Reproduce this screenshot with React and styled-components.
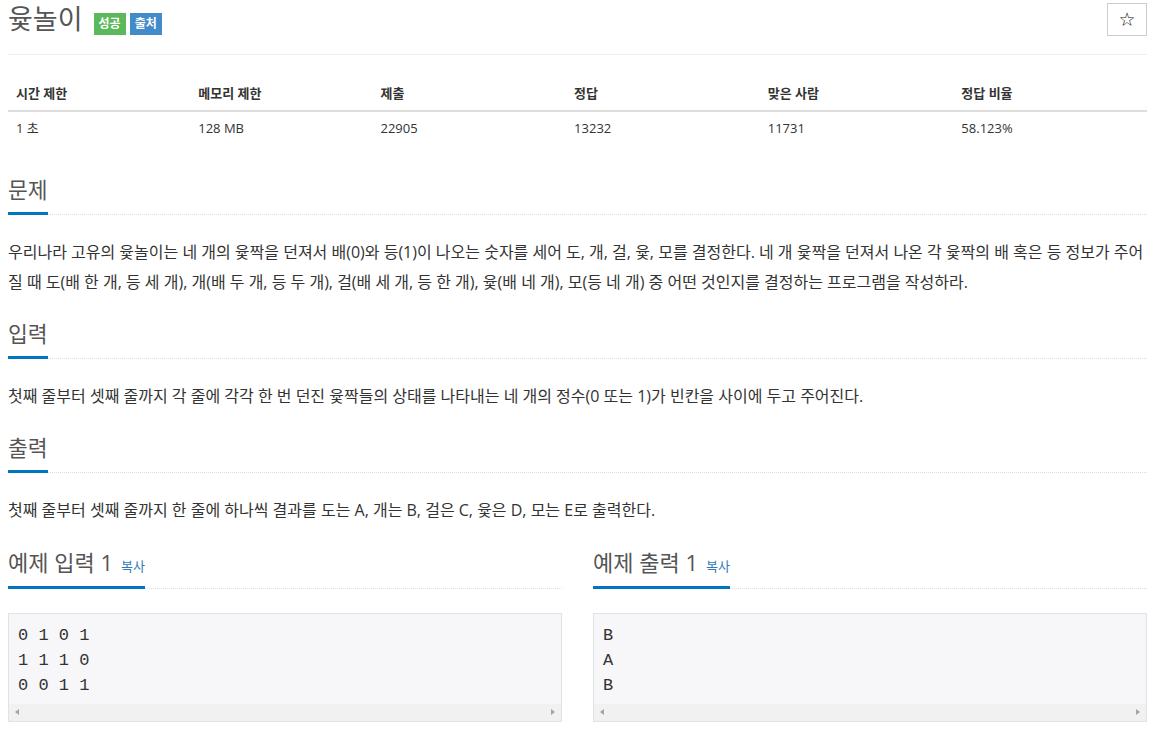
import React from 'react';
import styled, { createGlobalStyle } from 'styled-components';

const GlobalStyle = createGlobalStyle`
  body {
    margin: 0;
    background: #fff;
    font-family: "Open Sans", "Noto Sans CJK KR", sans-serif;
    color: #333;
  }
`;

const Page = styled.div`
  width: 1139px;
  padding: 0 12px 0 8px;
`;

const Header = styled.div`
  display: flex;
  align-items: flex-start;
  height: 51px;
  padding-top: 3px;
  border-bottom: 1px solid #eee;
`;

const Title = styled.h1`
  margin: 0;
  font-size: 27px;
  font-weight: 400;
  line-height: 32px;
  color: #555;
`;

const Label = styled.span`
  display: inline-block;
  margin-top: 10px;
  margin-left: ${p => p.$first ? '11px' : '4px'};
  padding: 0 5px;
  height: 22px;
  line-height: 22px;
  font-size: 12px;
  font-weight: 700;
  color: #fff;
  background: ${p => p.$color};
`;

const StarButton = styled.button`
  margin-left: auto;
  width: 40px;
  height: 33px;
  border: 1px solid #ccc;
  background: #fff;
  color: #111;
  font-size: 19px;
  line-height: 1;
  padding: 0;
  font-family: "DejaVu Sans", sans-serif;
`;

const Table = styled.table`
  width: 100%;
  margin-top: 21px;
  border-collapse: collapse;
  font-size: 13px;

  th {
    text-align: left;
    font-weight: 700;
    padding: 7px 8px;
    line-height: 20px;
    border-bottom: 2px solid #ddd;
  }

  td {
    padding: 6px 8px;
    line-height: 20px;
  }
`;

const Section = styled.section`
  margin-top: ${p => p.$top || '0px'};
`;

const Headline = styled.div`
  border-bottom: 1px dotted #ddd;
  margin-bottom: ${p => p.$flush ? '0' : '22px'};
  display: flex;
`;

const HeadTitle = styled.h2`
  margin: 0 0 -1px;
  font-size: ${p => p.$small ? '22px' : '21.5px'};
  font-weight: 400;
  line-height: 30px;
  padding-bottom: ${p => p.$small ? '5px' : '7px'};
  color: #555;
  border-bottom: 3px solid #0076c0;
  display: flex;
  align-items: baseline;
`;

const CopyLink = styled.span`
  font-size: 13px;
  color: #337ab7;
  margin-left: 8px;
`;

const Text = styled.p`
  margin: 0 0 22px;
  font-size: 16px;
  line-height: 30px;
  color: #333;
`;

const Samples = styled.div`
  display: grid;
  grid-template-columns: 1fr 1fr;
  column-gap: 31px;
`;

const Pre = styled.div`
  margin-top: 24px;
  border: 1px solid #e1e1e8;
  background: #f7f7f9;
`;

const Code = styled.pre`
  margin: 0;
  padding: 8.5px 9px 6px;
  font-family: "Liberation Mono", monospace;
  font-size: 17px;
  line-height: 25px;
  color: #333;
`;

const ScrollBar = styled.div`
  height: 17px;
  background: #f1f1f1;
  display: flex;
  align-items: center;
  justify-content: space-between;
  padding: 0 6px;
`;

const Arrow = styled.span`
  width: 0;
  height: 0;
  border-top: 3px solid transparent;
  border-bottom: 3px solid transparent;
  ${p => p.$dir === 'left'
    ? 'border-right: 4px solid #a3a3a3;'
    : 'border-left: 4px solid #a3a3a3;'}
`;

const stats = [
  ['시간 제한', '1 초', '16%'],
  ['메모리 제한', '128 MB', '16%'],
  ['제출', '22905', '17%'],
  ['정답', '13232', '17%'],
  ['맞은 사람', '11731', '17%'],
  ['정답 비율', '58.123%', '17%'],
];

const SampleBox = ({ title, data }) => (
  <div>
    <Headline $flush>
      <HeadTitle $small>
        {title}
        <CopyLink>복사</CopyLink>
      </HeadTitle>
    </Headline>
    <Pre>
      <Code>{data}</Code>
      <ScrollBar>
        <Arrow $dir="left" />
        <Arrow $dir="right" />
      </ScrollBar>
    </Pre>
  </div>
);

const App = () => (
  <Page>
    <GlobalStyle />
    <Header>
      <Title>윷놀이</Title>
      <Label $first $color="#5cb85c">성공</Label>
      <Label $color="#428bca">출처</Label>
      <StarButton>☆</StarButton>
    </Header>

    <Table>
      <thead>
        <tr>
          {stats.map(([h, , w]) => <th key={h} style={{ width: w }}>{h}</th>)}
        </tr>
      </thead>
      <tbody>
        <tr>
          {stats.map(([h, v]) => <td key={h}>{v}</td>)}
        </tr>
      </tbody>
    </Table>

    <Section $top="31px">
      <Headline><HeadTitle>문제</HeadTitle></Headline>
      <Text>
        우리나라 고유의 윷놀이는 네 개의 윷짝을 던져서 배(0)와 등(1)이 나오는 숫자를 세어 도, 개, 걸, 윷, 모를 결정한다. 네 개 윷짝을 던져서 나온 각 윷짝의 배 혹은 등 정보가 주어질 때 도(배 한 개, 등 세 개), 개(배 두 개, 등 두 개), 걸(배 세 개, 등 한 개), 윷(배 네 개), 모(등 네 개) 중 어떤 것인지를 결정하는 프로그램을 작성하라.
      </Text>
    </Section>

    <Section>
      <Headline><HeadTitle>입력</HeadTitle></Headline>
      <Text>첫째 줄부터 셋째 줄까지 각 줄에 각각 한 번 던진 윷짝들의 상태를 나타내는 네 개의 정수(0 또는 1)가 빈칸을 사이에 두고 주어진다.</Text>
    </Section>

    <Section>
      <Headline><HeadTitle>출력</HeadTitle></Headline>
      <Text>첫째 줄부터 셋째 줄까지 한 줄에 하나씩 결과를 도는 A, 개는 B, 걸은 C, 윷은 D, 모는 E로 출력한다.</Text>
    </Section>

    <Samples>
      <SampleBox title="예제 입력 1" data={'0 1 0 1\n1 1 1 0\n0 0 1 1'} />
      <SampleBox title="예제 출력 1" data={'B\nA\nB'} />
    </Samples>
  </Page>
);

export default App;
